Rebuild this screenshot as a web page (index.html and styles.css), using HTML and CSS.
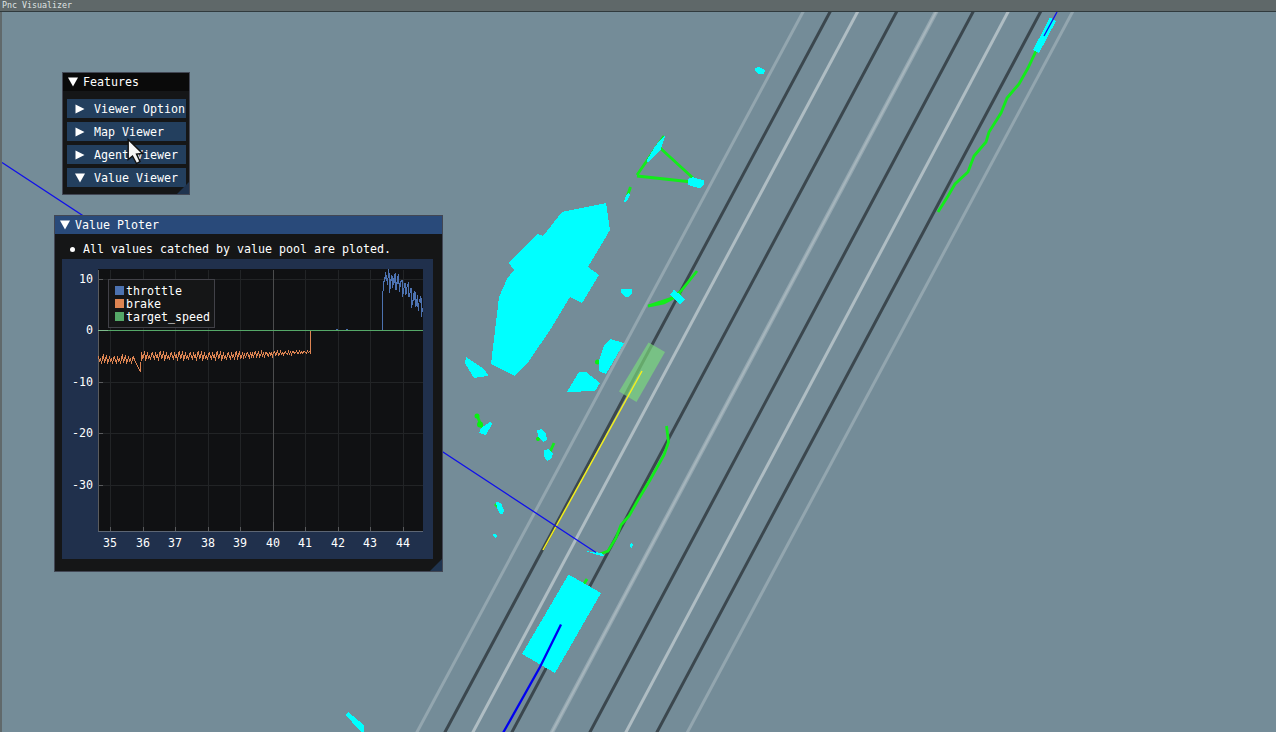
FILE: index.html
```html
<!DOCTYPE html>
<html lang="en">
<head>
<meta charset="utf-8">
<title>Pnc Visualizer</title>
<link rel="stylesheet" href="styles.css">
</head>
<body>
<div class="app">
  <header class="titlebar"><span>Pnc Visualizer</span></header>
  <main class="viewport">
    <svg class="map" viewBox="2 12 1274 720" width="1274" height="720">
      <g class="lane-faint">
        <path d="M803.500 11L416.500 733"/><path d="M1073 11L687 733"/>
      </g>
      <g class="lane-light">
        <path d="M858 11L472.500 733"/><path d="M1008.500 11L625.500 733"/>
      </g>
      <path class="lane-wide" d="M936.500 11L551.500 733"/>
      <path class="lane-core" d="M936.500 11L551.500 733"/>
      <g class="lane-dark">
        <path d="M830.500 11L444.500 733"/><path d="M897 11L511.500 733"/><path d="M973.500 11L589.500 733"/><path d="M1041 11L656.500 733"/>
      </g>
      <g class="track">
        <path d="M1036 51L1028 68L1019 84L1007 98L1001 113L989 132L986 142L974 156L968 172L955 184L948 196L938 212"/>
        <path d="M664 136L637 175M637 176L692 182M658 146L694 179"/>
        <path d="M630.500 187L627 197"/>
        <path d="M697 271L681 291L672 298L648 306M681 294L664 303L648 306"/>
        <path d="M666.500 426L668.500 442L664 455L650 480L638 500L629 516L621 525L616 538L608 551L600 554"/>
        <path d="M477 415L480 423L483 428M554 443L550 452M537 440l3-3M495 504l4 4M584 584l3-5"/>
      </g>
      <circle class="track-dot" cx="597.500" cy="362" r="2.500"/>
      <circle class="track-dot" cx="477" cy="416" r="2.500"/>
      <circle class="track-dot" cx="480" cy="424.500" r="3"/>
      <circle class="track-dot" cx="538" cy="439" r="2"/>
      <g class="obstacle">
        <path d="M562 212L606 203L610 230L588 267L599 275L582 303L570 297L552 327L529 361L515 376L491 364L499 297L507 279L514 270L509 263L537 234L543 236Z"/>
        <path d="M466 357L484 369L488 375L487 376L474 378L465 363Z"/>
        <path d="M610 339L624 343L606 374L599 371L599 360L604 346Z"/>
        <path d="M579 372L586 372L600 383L595 391L567 392Z"/>
        <path d="M621 289h11v4l-3 4h-4l-4-5Z"/>
        <path d="M755 68l4-1l6 3l-1 4l-6 0l-3-3Z"/>
        <path d="M666 134L661 149L648 163L647 160L654 148L660 140Z"/>
        <path d="M688 179L693 177L698 179L704 180L704 184L700 188L694 187L688 185Z"/>
        <path d="M628 193L630 195L627 201L624 202L626 196Z"/>
        <path d="M674 289.500L685 299L680 304L670 295Z"/>
        <path d="M1050 17.500L1056 21L1039 53L1033 50Z"/>
        <path d="M490 422L492 424L486 435L479 433L481 428Z"/>
        <path d="M537 430L542 429L546 434L547 440L543 442L538 436Z"/>
        <path d="M544 450L549 449L553 454L551 459L547 461L544 456Z"/>
        <path d="M496 502L501 503L504 510L503 514L500 514L497 508Z"/>
        <path d="M493 534l3 0l1 2l-2 2l-2-2Z"/>
        <path d="M630 544l1-1l2 2l-1 3l-2-1Z"/>
        <path d="M585 551L602 553L605 556.500L597 555Z"/>
        <path d="M568.500 574.500L601 593L555 673L522 654Z"/>
        <path d="M348 712L364 725L364 733L359 730L346 715Z"/>
      </g>
      <path class="ego" d="M648.500 342.500L665 352L636.500 402L619 391.500Z"/>
      <path class="planned" d="M642 371L543 550"/>
      <path class="vector" d="M2 162.500L596 552.500M1057 12L1044 36"/>
      <path class="vector-wide" d="M561 624.500L540 667L503 733"/>
    </svg>

    <section class="window features">
      <h1 class="window-title"><svg class="arrow" viewBox="0 0 10 10"><path d="M0 0.500H10L5 9.500Z"/></svg>Features</h1>
      <div class="feature-list">
        <div class="item"><svg class="arrow" viewBox="0 0 10 10"><path d="M0.500 0.500V9.500L9.500 5Z"/></svg><span>Viewer Option</span></div>
        <div class="item"><svg class="arrow" viewBox="0 0 10 10"><path d="M0.500 0.500V9.500L9.500 5Z"/></svg><span>Map Viewer</span></div>
        <div class="item"><svg class="arrow" viewBox="0 0 10 10"><path d="M0.500 0.500V9.500L9.500 5Z"/></svg><span>Agent Viewer</span></div>
        <div class="item"><svg class="arrow" viewBox="0 0 10 10"><path d="M0 0.500H10L5 9.500Z"/></svg><span>Value Viewer</span></div>
      </div>
      <i class="grip"></i>
    </section>

    <section class="window ploter">
      <h1 class="window-title active"><svg class="arrow" viewBox="0 0 10 10"><path d="M0 0.500H10L5 9.500Z"/></svg>Value Ploter</h1>
      <p class="note">All values catched by value pool are ploted.</p>
      <svg class="chart" viewBox="62 259 371 300" width="371" height="300">
        <rect class="plot-bg" x="98" y="269" width="325" height="262"/>
        <path class="grid" d="M110.500 270V531M143.500 270V531M175.500 270V531M208.500 270V531M240.500 270V531M305.500 270V531M338.500 270V531M370.500 270V531M403.500 270V531M98 279.500H423M98 382.500H423M98 433.500H423M98 485.500H423"/>
        <path class="grid-major" d="M273.500 270V531"/>
        <path class="axis" d="M98.500 270V531M110.500 527V531M143.500 527V531M175.500 527V531M208.500 527V531M240.500 527V531M273.500 522V531M305.500 527V531M338.500 527V531M370.500 527V531M403.500 527V531M98 279.500h5M98 382.500h5M98 433.500h5M98 485.500h5"/>
        <path class="axis-x" d="M98 531.500H423"/>
        <polyline class="brake" id="brake"/>
        <path class="throttle" d="M336 329.500h2M346 329.500h2M382.500 330V291M383.500 291V281M384.500 282V277M385.500 279V272M386.500 275V281M387.500 285V278M388.500 278V269M389.500 273V293M390.500 289V279M391.500 281V275M392.500 276V288M393.500 285V278M394.500 283V274M395.500 273V290M396.500 290V282M397.500 284V276M398.500 274V284M399.500 283V292M400.500 287V281M401.500 282V280M402.500 280V297M403.500 294V288M404.500 288V283M405.500 283V295M406.500 294V287M407.500 287V284M408.500 282V297M409.500 297V293M410.500 293V288M411.500 288V308M412.500 305V300M413.500 301V293M414.500 291V300M415.500 292V307M416.500 306V299M417.500 295V307M418.500 311V303M419.500 302V299M420.500 296V303M421.500 298V317M422.500 312V308"/>
        <path class="target" d="M98 330.500H423"/>
        <path class="tick-zero" d="M98 330.500h10"/>
        <rect class="legend-box" x="108.500" y="279.500" width="106" height="48"/>
        <rect fill="#4c72b0" x="115" y="286" width="9" height="9"/>
        <rect fill="#dd8452" x="115" y="299" width="9" height="9"/>
        <rect fill="#55a868" x="115" y="312" width="9" height="9"/>
        <g class="label">
          <text x="126" y="295">throttle</text><text x="126" y="308">brake</text><text x="126" y="321">target_speed</text>
        </g>
        <g class="label end">
          <text x="93" y="283">10</text><text x="93" y="334">0</text><text x="93" y="386">-10</text><text x="93" y="437">-20</text><text x="93" y="489">-30</text>
        </g>
        <g class="label mid">
          <text x="110" y="547">35</text><text x="143" y="547">36</text><text x="175" y="547">37</text><text x="208" y="547">38</text><text x="240" y="547">39</text><text x="273" y="547">40</text><text x="305" y="547">41</text><text x="338" y="547">42</text><text x="370" y="547">43</text><text x="403" y="547">44</text>
        </g>
      </svg>
      <i class="grip"></i>
    </section>

    <svg class="cursor" viewBox="0 0 18 29" width="18" height="29"><path d="M1.200 1.500V21.500L5.500 18L9.500 25.500L13 23.500L9.500 16L15.500 15.500Z"/></svg>
  </main>
</div>
<script src="plot.js"></script>
</body>
</html>
```
FILE: styles.css
```css
* { box-sizing: border-box; }
body {
  margin: 0;
  overflow: hidden;
  font: 11.63px/13px "DejaVu Sans Mono", monospace;
  color: #fff;
}
.app { width: 1276px; height: 732px; display: flex; flex-direction: column; background: #748c98; }
.titlebar {
  height: 12px;
  flex: none;
  padding-left: 2px;
  background: #5f6869;
  border-bottom: 1px solid #303a3d;
  color: #dfe3e3;
  font-size: 9.500px;
  line-height: 10px;
}
.titlebar span { display: inline-block; transform: scaleX(.875); transform-origin: 0 0; }
.viewport { position: relative; flex: 1; border-left: 2px solid #60696b; overflow: hidden; }
.map { display: block; }
.map path { fill: none; }
.lane-faint { stroke: #93a6af; stroke-width: 3; }
.lane-light { stroke: #afbdc3; stroke-width: 3; }
.lane-wide { stroke: #94a7b0; stroke-width: 4.400; }
.lane-core { stroke: #a7b6bd; stroke-width: 1.800; }
.lane-dark { stroke: #3b474e; stroke-width: 3; }
.track { stroke: #12ec1a; stroke-width: 2.800; }
.track-dot { fill: #08f010; }
.map .obstacle path { fill: #0ff; shape-rendering: crispEdges; }
.map .ego { fill: #7bdc7b; fill-opacity: .66; }
.planned { stroke: #f4f01c; stroke-width: 1.500; }
.vector { stroke: #1010ea; stroke-width: 1.300; }
.vector-wide { stroke: #0000f0; stroke-width: 2.300; }

.window { position: absolute; background: #151617; border: 1px solid #424754; }
.features { left: 60px; top: 60px; width: 128px; height: 123px; }
.ploter { left: 52px; top: 203px; width: 389px; height: 357px; }
.window-title {
  margin: 0;
  height: 18px;
  padding-left: 5px;
  display: flex;
  align-items: center;
  gap: 5px;
  background: #0a0a0a;
  font: inherit;
}
.window-title.active { background: #294a7a; }
.arrow { width: 10px; height: 10px; flex: none; fill: #fff; }
.feature-list { display: flex; flex-direction: column; gap: 4px; padding: 8px 3px 0 4px; }
.item {
  height: 19px;
  padding-left: 8px;
  display: flex;
  align-items: center;
  gap: 9px;
  background: #233f5e;
  white-space: nowrap;
  overflow: hidden;
}
.item span { padding-top: 2px; }
.grip {
  position: absolute;
  right: 0;
  bottom: 0;
  width: 12px;
  height: 12px;
  background: #20344f;
  clip-path: polygon(100% 0, 100% 100%, 0 100%);
}
.note { margin: 0; padding: 9px 0 3px 10px; display: flex; align-items: center; gap: 8px; }
.note::before { content: ""; width: 5px; height: 5px; margin: 0 0 0 5px; border-radius: 50%; background: #fff; }
.chart { display: block; margin-left: 7px; background: #20304c; }
.plot-bg { fill: #101113; }
.chart path, .chart polyline { fill: none; stroke-width: 1; shape-rendering: crispEdges; }
.grid { stroke: #222426; }
.grid-major { stroke: #4b4c4d; }
.axis { stroke: #5a5b5d; }
.axis-x { stroke: #5d6674; }
.throttle { stroke: #4c72b0; }
.brake { stroke: #dd8452; }
.target { stroke: #55a868; }
.tick-zero { stroke: #7fbb8d; }
.legend-box { fill: #151617; stroke: #414148; }
.label { fill: #fff; }
.end { text-anchor: end; }
.mid { text-anchor: middle; }
.cursor { position: absolute; left: 125px; top: 126px; fill: #f6f6f6; stroke: #111; stroke-width: 1.400; }
```
FILE: plot.js
```js
// Brake trace: a ripple with a period of about three pixels.
const ripple = [-0.6, 0.2, 0.9, -0.8, 0.5, -0.3, 1, -0.5, -0.9, 0.7, 0.1, -1, 0.8, 0.4, -0.7, 0.6, -0.2, 0.9, -0.4];
const points = [];
for (let x = 98; x <= 309; x++) {
  let mid, amp;
  if (x < 134) { mid = 359.5; amp = 4.5; }
  else if (x < 141) { mid = 360 + (x - 134) * 2; amp = 0.6; }
  else if (x < 230) { mid = 355.8; amp = 4.7; }
  else { mid = 355.8 - (x - 230) * 0.05; amp = Math.max(1.2, 4.4 - (x - 230) * 0.045); }
  points.push(`${x + 0.5},${(mid + amp * ripple[x % ripple.length]).toFixed(1)}`);
}
points.push("310.5,353", "310.5,331");
document.getElementById("brake").setAttribute("points", points.join(" "));
```
